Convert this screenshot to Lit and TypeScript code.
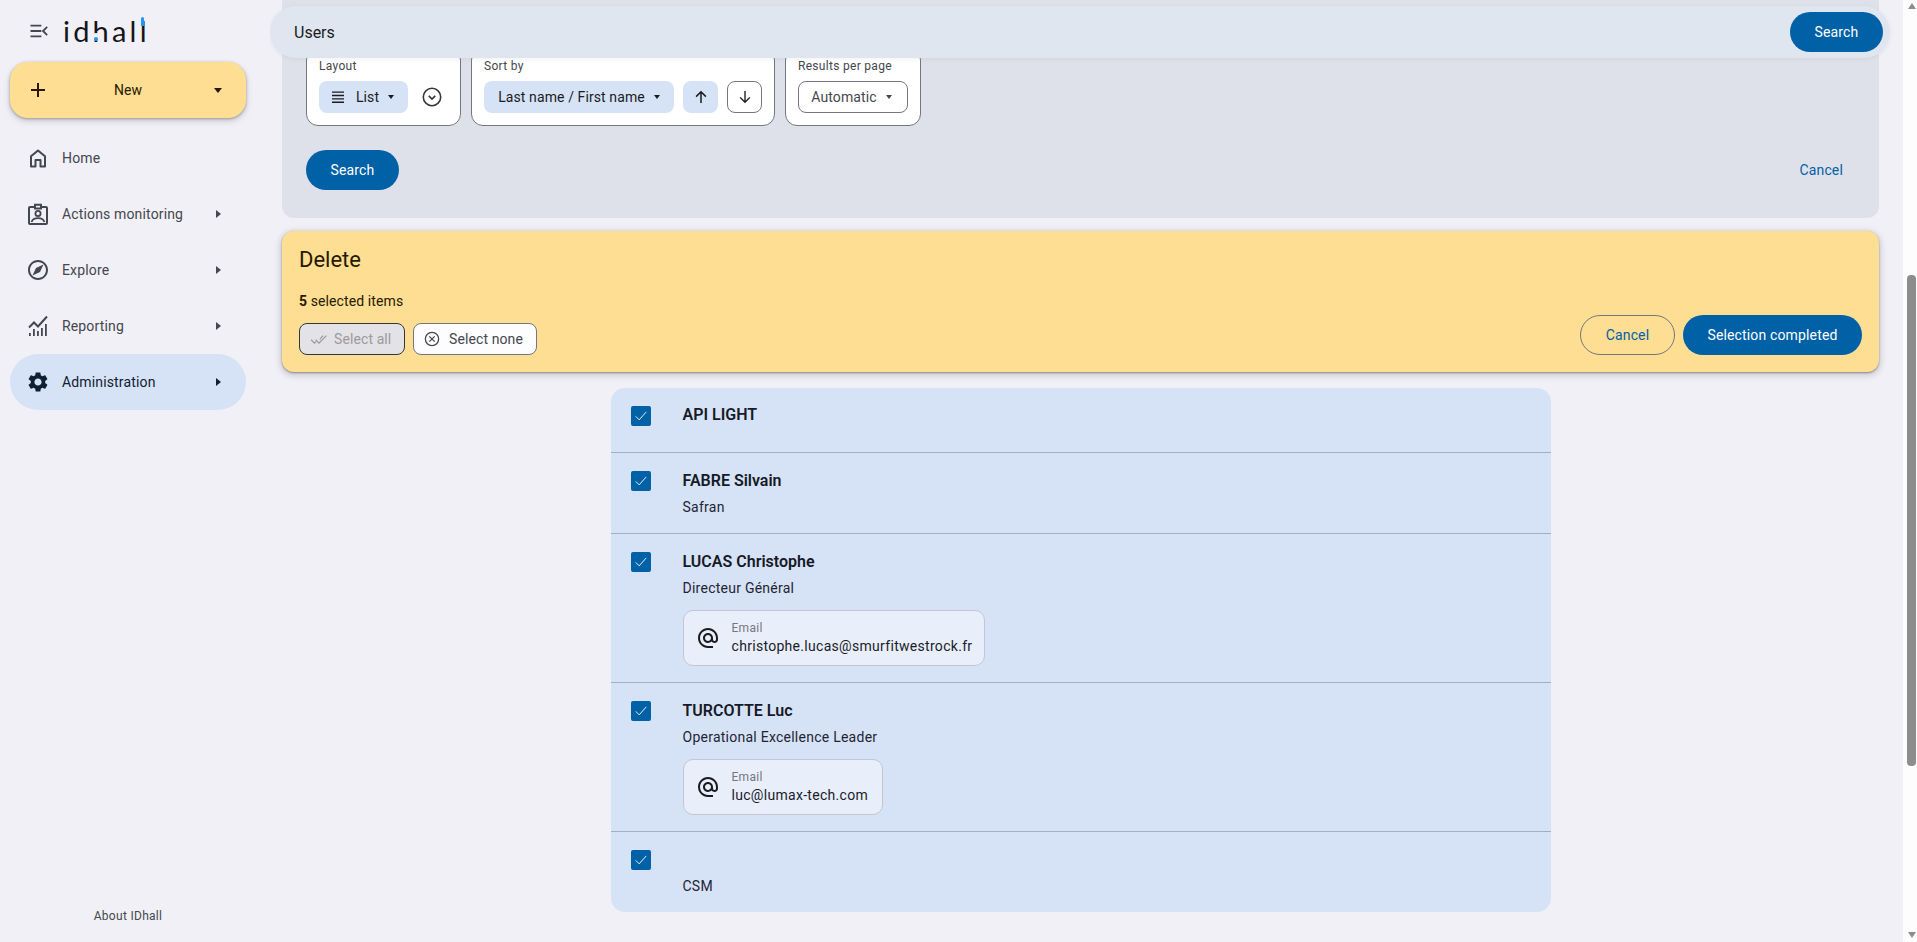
import { LitElement, html, css, svg } from "lit";
import { customElement } from "lit/decorators.js";

const icon = (body: unknown, size = 24, cls = "") => html`
  <svg class=${cls} width=${size} height=${size} viewBox="0 0 24 24" fill="currentColor" aria-hidden="true">${body}</svg>
`;

const icons = {
  menu: svg`<path d="M3 5.500h13M3 12h13M3 18.500h13M23 7l-5 5 5 5" fill="none" stroke="currentColor" stroke-width="2.200"/>`,
  plus: svg`<path d="M12 5v14M5 12h14" fill="none" stroke="currentColor" stroke-width="2"/>`,
  home: svg`<path d="M5 20.500V10.300l7-5.800 7 5.800v10.200h-4.500V14h-5v6.500z" fill="none" stroke="currentColor" stroke-width="2" stroke-linejoin="round"/>`,
  badge: svg`<path d="M9 5H4a1 1 0 0 0-1 1v15a1 1 0 0 0 1 1h16a1 1 0 0 0 1-1V6a1 1 0 0 0-1-1h-5M9 6.500V2.800h6v3.700z" fill="none" stroke="currentColor" stroke-width="2"/><circle cx="12" cy="11.500" r="2.600" fill="none" stroke="currentColor" stroke-width="1.800"/><path d="M5.500 20c1-2.600 3.500-3.800 6.500-3.800s5.500 1.200 6.500 3.800" fill="none" stroke="currentColor" stroke-width="1.800"/>`,
  explore: svg`<path d="M12 2C6.480 2 2 6.480 2 12s4.480 10 10 10 10-4.480 10-10S17.520 2 12 2zm0 18c-4.410 0-8-3.590-8-8s3.590-8 8-8 8 3.590 8 8-3.590 8-8 8zm-5.500-2.500l7.510-3.490L17.500 6.500 9.990 9.990 6.500 17.500z"/>`,
  chart: svg`<path d="M3 13.500l5-5 4 4L21 2.500" fill="none" stroke="currentColor" stroke-width="2"/><path d="M3 19h1.800v3H3zM7 15h1.800v7H7zM11 17h1.800v5H11zM15 14h1.800v8H15zM19 10h1.800v12H19z"/>`,
  gear: svg`<path d="M19.140 12.940c.04-.3.06-.61.06-.94 0-.32-.02-.64-.07-.94l2.030-1.580c.18-.14.23-.41.12-.61l-1.920-3.320c-.12-.22-.37-.29-.59-.22l-2.390.96c-.5-.38-1.030-.7-1.620-.94l-.36-2.540c-.04-.24-.24-.41-.48-.41h-3.840c-.24 0-.43.17-.47.41l-.36 2.540c-.59.24-1.130.57-1.620.94l-2.390-.96c-.22-.08-.47 0-.59.22L2.740 8.870c-.12.21-.08.47.12.61l2.030 1.580c-.05.3-.09.63-.09.94s.02.64.07.94l-2.030 1.580c-.18.14-.23.41-.12.61l1.920 3.320c.12.22.37.29.59.22l2.390-.96c.5.38 1.030.7 1.620.94l.36 2.540c.05.24.24.41.48.41h3.840c.24 0 .44-.17.47-.41l.36-2.540c.59-.24 1.130-.56 1.620-.94l2.390.96c.22.08.47 0 .59-.22l1.920-3.320c.12-.22.07-.47-.12-.61l-2.010-1.580zM12 15.600c-1.980 0-3.600-1.620-3.600-3.600s1.620-3.600 3.600-3.600 3.600 1.620 3.600 3.600-1.620 3.600-3.600 3.600z"/>`,
  lines: svg`<path d="M4 5.500h16M4 10h16M4 14.500h16M4 19h16" fill="none" stroke="currentColor" stroke-width="1.700"/>`,
  circleDown: svg`<circle cx="12" cy="12" r="9.500" fill="none" stroke="currentColor" stroke-width="1.700"/><path d="M8.500 10.800l3.500 3.500 3.500-3.500" fill="none" stroke="currentColor" stroke-width="1.800"/>`,
  up: svg`<path d="M12 20V5M5.500 11.500L12 5l6.500 6.500" fill="none" stroke="currentColor" stroke-width="2"/>`,
  down: svg`<path d="M12 4v15M5.500 12.500L12 19l6.500-6.500" fill="none" stroke="currentColor" stroke-width="1.800"/>`,
  doneAll: svg`<path d="M1.500 13l4.500 4.500 2-2M7.500 13l4.500 4.500L22 7.500M13 12.500l4.500-5" fill="none" stroke="currentColor" stroke-width="1.700"/>`,
  circleX: svg`<circle cx="12" cy="12" r="10" fill="none" stroke="currentColor" stroke-width="1.900"/><path d="M8 8l8 8M16 8l-8 8" fill="none" stroke="currentColor" stroke-width="1.900"/>`,
  check: svg`<path d="M5 12.500l4.600 4.600L19 6.500" fill="none" stroke="currentColor" stroke-width="1.200"/>`,
  email: svg`<path d="M12 1.950c-5.520 0-10 4.480-10 10s4.480 10 10 10h5v-2h-5c-4.340 0-8-3.660-8-8s3.660-8 8-8 8 3.660 8 8v1.430c0 .79-.71 1.570-1.500 1.570s-1.500-.78-1.500-1.570v-1.430c0-2.760-2.240-5-5-5s-5 2.240-5 5 2.240 5 5 5c1.380 0 2.640-.56 3.540-1.470.65.89 1.770 1.470 2.960 1.470 1.970 0 3.500-1.600 3.500-3.570v-1.430c0-5.520-4.480-10-10-10zm0 13c-1.660 0-3-1.340-3-3s1.340-3 3-3 3 1.340 3 3-1.340 3-3 3z"/>`,
};

const caretDown = html`<span class="caret-down"></span>`;
const caretRight = html`<span class="caret-right"></span>`;

const navItems = [
  { label: "Home", icon: icons.home, more: false, active: false },
  { label: "Actions monitoring", icon: icons.badge, more: true, active: false },
  { label: "Explore", icon: icons.explore, more: true, active: false },
  { label: "Reporting", icon: icons.chart, more: true, active: false },
  { label: "Administration", icon: icons.gear, more: true, active: true },
];

const users = [
  { name: "API LIGHT", sub: "", email: "" },
  { name: "FABRE Silvain", sub: "Safran", email: "" },
  { name: "LUCAS Christophe", sub: "Directeur Général", email: "christophe.lucas@smurfitwestrock.fr" },
  { name: "TURCOTTE Luc", sub: "Operational Excellence Leader", email: "luc@lumax-tech.com" },
  { name: "", sub: "CSM", email: "" },
];

@customElement("app-root")
export class AppRoot extends LitElement {
  static styles = css`
    :host {
      display: block;
      height: 100vh;
      overflow: hidden;
      background: #f1f0f6;
      color: #1a1c1e;
      font-family: Roboto, "Noto Sans", sans-serif;
      font-size: 14px;
    }

    * {
      box-sizing: border-box;
    }

    svg {
      display: block;
      flex: none;
    }

    .app {
      display: grid;
      grid-template-columns: 270px 1fr 14px;
      height: 100%;
    }

    /* sidebar */
    .sidebar {
      display: flex;
      flex-direction: column;
      padding: 0 24px 18px 10px;
    }

    .brand {
      display: flex;
      align-items: center;
      height: 62px;
      padding-left: 18px;
      color: #44474e;
    }

    .logo {
      position: relative;
      margin-left: 15px;
      font-family: Lato, sans-serif;
      font-size: 29px;
      font-weight: 400;
      line-height: 32px;
      letter-spacing: 3.200px;
      color: #14161a;
    }

    .logo__dot {
      position: absolute;
      left: 31px;
      top: 22px;
      width: 4px;
      height: 4px;
      border-radius: 50%;
      background: #2196f3;
      box-shadow: 0 -3px 0 1px #f1f0f6;
    }

    .logo__top {
      position: absolute;
      left: 78px;
      top: 2px;
      width: 3px;
      height: 9px;
      background: #2196f3;
      border-radius: 2px 2px 0 0;
    }

    .new {
      display: flex;
      align-items: center;
      height: 56px;
      flex: none;
      padding: 0 24px 0 16px;
      border-radius: 18px;
      background: #fdde92;
      color: #261900;
      font-weight: 450;
      letter-spacing: 0.1px;
      box-shadow: 0 1px 3px rgba(0, 0, 0, 0.3), 0 3px 6px 1px rgba(0, 0, 0, 0.12);
    }

    .new__label {
      flex: 1;
      margin-right: 8px;
      text-align: center;
    }

    .new .caret-down {
      border-width: 5px 4.500px 0;
    }

    .nav {
      display: flex;
      flex-direction: column;
      margin-top: 12px;
    }

    .nav__item {
      display: flex;
      align-items: center;
      height: 56px;
      padding: 0 25px 0 16px;
      gap: 12px;
      border-radius: 28px;
      color: #44474e;
      font-weight: 450;
      letter-spacing: 0.15px;
    }

    .nav__item--active {
      background: #d6e3f6;
      color: #102033;
    }

    .nav__label {
      flex: 1;
    }

    .about {
      margin-top: auto;
      text-align: center;
      font-size: 12px;
      font-weight: 450;
      line-height: 16px;
      letter-spacing: 0.3px;
      color: #44474e;
    }

    .caret-down {
      display: inline-block;
      flex: none;
      width: 0;
      height: 0;
      border-style: solid;
      border-width: 4px 3.500px 0;
      border-color: currentColor transparent transparent;
    }

    .caret-right {
      display: inline-block;
      flex: none;
      width: 0;
      height: 0;
      border-style: solid;
      border-width: 4.500px 0 4.500px 5px;
      border-color: transparent transparent transparent currentColor;
    }

    /* main column */
    .main {
      position: relative;
      min-width: 0;
      padding: 0 24px 0 12px;
      overflow: hidden;
    }

    .topbar {
      position: absolute;
      top: 6px;
      left: 0;
      width: 1620px;
      height: 52px;
      display: flex;
      align-items: center;
      justify-content: space-between;
      padding: 0 7px 0 24px;
      border-radius: 26px;
      background: #dfe6f0;
      font-size: 16px;
      box-shadow: 0 1px 5px rgba(0, 0, 0, 0.06);
    }

    .filled {
      display: inline-flex;
      align-items: center;
      justify-content: center;
      height: 40px;
      border-radius: 20px;
      background: #0061a6;
      color: #fff;
      font-size: 14px;
      font-weight: 450;
      letter-spacing: 0.15px;
    }

    .filled--search {
      width: 93px;
    }

    .filled--done {
      width: 179px;
    }

    .panel {
      height: 218px;
      padding: 48px 24px 28px;
      border-radius: 0 0 12px 12px;
      background: #dfe1ea;
    }

    .cards {
      display: flex;
      gap: 10px;
    }

    .card {
      height: 78px;
      padding: 9px 12px 0;
      border: 1px solid #74777f;
      border-radius: 12px;
      background: #fff;
    }

    .card--layout {
      width: 155px;
    }

    .card__label {
      font-size: 12px;
      line-height: 16px;
      letter-spacing: 0.3px;
      color: #44474e;
    }

    .card__row {
      display: flex;
      align-items: center;
      gap: 8px;
      margin-top: 7px;
    }

    .chip {
      display: flex;
      align-items: center;
      justify-content: center;
      height: 32px;
      border-radius: 8px;
      font-weight: 450;
      letter-spacing: 0.1px;
      color: #1a1c1e;
    }

    .chip--on {
      background: #d6e3f6;
    }

    .chip--off {
      border: 1px solid #74777f;
    }

    .chip--list {
      width: 89px;
      gap: 9px;
      padding-right: 4px;
    }

    .chip--sort {
      width: 190px;
      gap: 9px;
      margin-right: 1px;
    }

    .chip--icon {
      width: 35px;
    }

    .chip--icon + .chip--icon {
      margin-left: 1px;
    }

    .chip--auto {
      width: 110px;
      gap: 9px;
      padding-right: 3px;
      color: #44474e;
    }

    .layout-toggle {
      margin-left: 5px;
      color: #33363c;
    }

    .panel__actions {
      display: flex;
      align-items: center;
      justify-content: space-between;
      margin-top: 24px;
    }

    .text-btn {
      padding-right: 12px;
      color: #0061a6;
      font-weight: 450;
      letter-spacing: 0.15px;
    }

    /* selection bar */
    .selection {
      margin-top: 13px;
      height: 141px;
      padding: 15px 17px 16px;
      border-radius: 12px;
      background: #fdde92;
      color: #261900;
      box-shadow: 0 1px 2px rgba(0, 0, 0, 0.35), 0 2px 6px 2px rgba(0, 0, 0, 0.15);
    }

    .selection__title {
      font-size: 22px;
      line-height: 28px;
    }

    .selection__count {
      margin-top: 17px;
      line-height: 20px;
      letter-spacing: 0.1px;
    }

    .selection__row {
      display: flex;
      align-items: flex-end;
      justify-content: space-between;
      margin-top: 4px;
    }

    .group {
      display: flex;
      gap: 8px;
    }

    .outline {
      display: flex;
      align-items: center;
      height: 32px;
      gap: 8px;
      border-radius: 8px;
      border: 1px solid #74777f;
      background: #fdfcff;
      color: #44474e;
      font-weight: 450;
      letter-spacing: 0.1px;
    }

    .outline--all {
      width: 106px;
      padding-left: 10px;
      gap: 6px;
      border-color: #33363c;
      background: #e3e2e6;
      color: #9b9b9c;
    }

    .outline--none {
      width: 124px;
      padding-left: 10px;
      gap: 9px;
    }

    .stroked {
      display: flex;
      align-items: center;
      justify-content: center;
      width: 95px;
      height: 40px;
      border: 1px solid #74777f;
      border-radius: 20px;
      color: #0061a6;
      font-weight: 450;
      letter-spacing: 0.15px;
    }

    /* result list */
    .list {
      width: 940px;
      margin: 16px auto 0;
      border-radius: 14px;
      background: #d6e3f6;
    }

    .row {
      display: flex;
      gap: 32px;
      padding: 16px 20px;
      border-bottom: 1px solid #9fb0c6;
    }

    .row:last-child {
      border-bottom: 0;
    }

    .check {
      display: flex;
      align-items: center;
      justify-content: center;
      width: 20px;
      height: 20px;
      margin-top: 2px;
      border-radius: 2px;
      background: #0061a6;
      color: #fff;
    }

    .row__name {
      min-height: 24px;
      font-size: 16px;
      font-weight: 600;
      line-height: 24px;
      color: #171a26;
    }

    .row__sub {
      margin-top: 4px;
      line-height: 20px;
      letter-spacing: 0.25px;
      color: #1f2435;
    }

    .row--bare .row__name {
      min-height: 32px;
      line-height: 21px;
    }

    .contact {
      display: inline-flex;
      align-items: center;
      min-width: 200px;
      height: 56px;
      gap: 12px;
      margin-top: 12px;
      padding: 0 12px;
      border: 1px solid #c4c6d0;
      border-radius: 10px;
      background: #e9eefb;
      vertical-align: top;
    }

    .contact__label {
      font-size: 12px;
      line-height: 16px;
      letter-spacing: 0.3px;
      color: #74777f;
    }

    .contact__value {
      line-height: 20px;
      letter-spacing: 0.3px;
      color: #1a1c2a;
    }

    /* window scrollbar */
    .scrollbar {
      display: flex;
      flex-direction: column;
      align-items: center;
      padding-left: 3px;
      background: #fdfdfd;
      color: #8d8d8d;
    }

    .scrollbar__arrow {
      width: 0;
      height: 0;
      border-style: solid;
      border-color: transparent;
    }

    .scrollbar__arrow--up {
      margin-top: 3px;
      border-width: 0 4.500px 6px;
      border-bottom-color: currentColor;
    }

    .scrollbar__thumb {
      width: 9px;
      height: 491px;
      margin-top: 266px;
      border-radius: 4px;
      background: currentColor;
    }

    .scrollbar__arrow--down {
      margin-top: 166px;
      border-width: 6px 4.500px 0;
      border-top-color: currentColor;
    }
  `;

  private renderSidebar() {
    return html`
      <aside class="sidebar">
        <div class="brand">
          ${icon(icons.menu, 20)}
          <div class="logo">idhall<span class="logo__dot"></span><span class="logo__top"></span></div>
        </div>
        <div class="new">
          ${icon(icons.plus, 24)}
          <span class="new__label">New</span>
          ${caretDown}
        </div>
        <nav class="nav">
          ${navItems.map(
            (item) => html`
              <div class="nav__item ${item.active ? "nav__item--active" : ""}">
                ${icon(item.icon, 24)}
                <span class="nav__label">${item.label}</span>
                ${item.more ? caretRight : null}
              </div>
            `
          )}
        </nav>
        <div class="about">About IDhall</div>
      </aside>
    `;
  }

  private renderPanel() {
    return html`
      <section class="panel">
        <div class="cards">
          <div class="card card--layout">
            <div class="card__label">Layout</div>
            <div class="card__row">
              <div class="chip chip--on chip--list">${icon(icons.lines, 18)}<span>List</span>${caretDown}</div>
              <span class="layout-toggle">${icon(icons.circleDown, 22)}</span>
            </div>
          </div>
          <div class="card">
            <div class="card__label">Sort by</div>
            <div class="card__row">
              <div class="chip chip--on chip--sort"><span>Last name / First name</span>${caretDown}</div>
              <div class="chip chip--on chip--icon">${icon(icons.up, 18)}</div>
              <div class="chip chip--off chip--icon">${icon(icons.down, 18)}</div>
            </div>
          </div>
          <div class="card">
            <div class="card__label">Results per page</div>
            <div class="card__row">
              <div class="chip chip--off chip--auto"><span>Automatic</span>${caretDown}</div>
            </div>
          </div>
        </div>
        <div class="panel__actions">
          <div class="filled filled--search">Search</div>
          <div class="text-btn">Cancel</div>
        </div>
      </section>
    `;
  }

  private renderSelection() {
    return html`
      <section class="selection">
        <div class="selection__title">Delete</div>
        <div class="selection__count"><b>5</b> selected items</div>
        <div class="selection__row">
          <div class="group">
            <div class="outline outline--all">${icon(icons.doneAll, 18)}<span>Select all</span></div>
            <div class="outline outline--none">${icon(icons.circleX, 16)}<span>Select none</span></div>
          </div>
          <div class="group">
            <div class="stroked">Cancel</div>
            <div class="filled filled--done">Selection completed</div>
          </div>
        </div>
      </section>
    `;
  }

  private renderRow(user: { name: string; sub: string; email: string }) {
    return html`
      <div class="row ${user.sub ? "" : "row--bare"}">
        <div class="check">${icon(icons.check, 18)}</div>
        <div>
          <div class="row__name">${user.name}</div>
          ${user.sub ? html`<div class="row__sub">${user.sub}</div>` : null}
          ${user.email
            ? html`
                <div class="contact">
                  ${icon(icons.email, 24)}
                  <div>
                    <div class="contact__label">Email</div>
                    <div class="contact__value">${user.email}</div>
                  </div>
                </div>
              `
            : null}
        </div>
      </div>
    `;
  }

  render() {
    return html`
      <div class="app">
        ${this.renderSidebar()}
        <main class="main">
          ${this.renderPanel()} ${this.renderSelection()}
          <section class="list">${users.map((user) => this.renderRow(user))}</section>
          <header class="topbar">
            <span>Users</span>
            <div class="filled filled--search">Search</div>
          </header>
        </main>
        <div class="scrollbar">
          <span class="scrollbar__arrow scrollbar__arrow--up"></span>
          <span class="scrollbar__thumb"></span>
          <span class="scrollbar__arrow scrollbar__arrow--down"></span>
        </div>
      </div>
    `;
  }
}
